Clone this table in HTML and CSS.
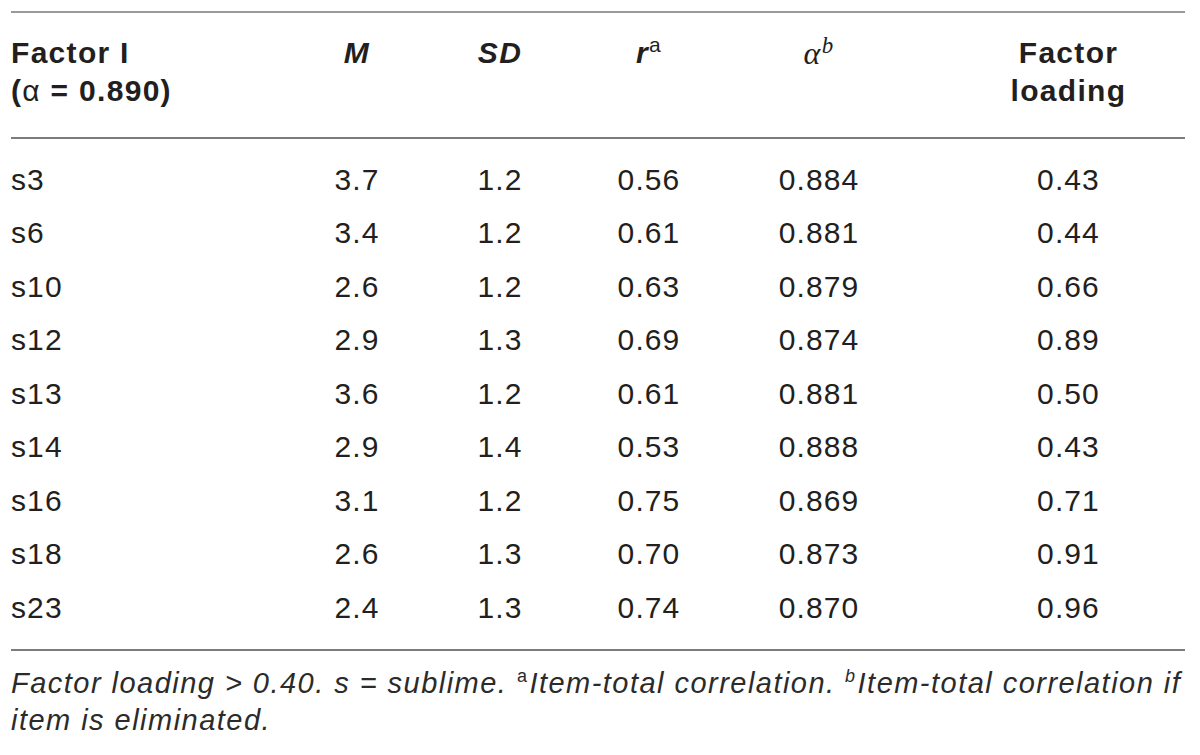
FILE: index.html
```html
<!DOCTYPE html>
<html lang="en">
<head>
    <meta charset="UTF-8">
    <title>Factor I item statistics</title>
    <link rel="stylesheet" href="styles.css">
</head>
<body>

<div class="table-wrap">
    <table class="stats">
        <colgroup>
            <col class="c-item">
            <col class="c-m">
            <col class="c-sd">
            <col class="c-r">
            <col class="c-alpha">
            <col class="c-load">
        </colgroup>
        <thead>
            <tr>
                <th class="item">Factor I<br>(<span class="sym">α</span> = 0.890)</th>
                <th><i>M</i></th>
                <th><i>SD</i></th>
                <th><i>r</i><sup class="sup-a">a</sup></th>
                <th><span class="greek">α</span><sup class="sup-b">b</sup></th>
                <th class="load">Factor<br>loading</th>
            </tr>
        </thead>
        <tbody>
            <tr><td class="item">s3</td><td>3.7</td><td>1.2</td><td>0.56</td><td>0.884</td><td class="load">0.43</td></tr>
            <tr><td class="item">s6</td><td>3.4</td><td>1.2</td><td>0.61</td><td>0.881</td><td class="load">0.44</td></tr>
            <tr><td class="item">s10</td><td>2.6</td><td>1.2</td><td>0.63</td><td>0.879</td><td class="load">0.66</td></tr>
            <tr><td class="item">s12</td><td>2.9</td><td>1.3</td><td>0.69</td><td>0.874</td><td class="load">0.89</td></tr>
            <tr><td class="item">s13</td><td>3.6</td><td>1.2</td><td>0.61</td><td>0.881</td><td class="load">0.50</td></tr>
            <tr><td class="item">s14</td><td>2.9</td><td>1.4</td><td>0.53</td><td>0.888</td><td class="load">0.43</td></tr>
            <tr><td class="item">s16</td><td>3.1</td><td>1.2</td><td>0.75</td><td>0.869</td><td class="load">0.71</td></tr>
            <tr><td class="item">s18</td><td>2.6</td><td>1.3</td><td>0.70</td><td>0.873</td><td class="load">0.91</td></tr>
            <tr><td class="item">s23</td><td>2.4</td><td>1.3</td><td>0.74</td><td>0.870</td><td class="load">0.96</td></tr>
        </tbody>
    </table>

    <p class="note">Factor loading &gt; 0.40. s = sublime. <sup>a</sup>Item-total correlation. <sup class="note-b">b</sup>Item-total correlation if<br>item is eliminated.</p>
</div>

</body>
</html>
```

FILE: styles.css
```css
/* Page */
body {
    margin: 0;
    padding: 0;
    background-color: #ffffff;
    color: #231f20;
    font-family: 'Liberation Sans', Arial, sans-serif;
}

.table-wrap {
    width: 1174px;
    margin-left: 11px;
    padding-top: 11px;
}

/* Table */
.stats {
    width: 100%;
    border-collapse: collapse;
    table-layout: fixed;
    font-size: 30px;
    letter-spacing: 1.1px;
}

.c-item { width: 279px; }
.c-m { width: 134px; }
.c-sd { width: 152px; }
.c-r { width: 146px; }
.c-alpha { width: 194px; }
.c-load { width: 269px; }

.stats thead tr {
    border-top: 2px solid #9a9a9a;
    border-bottom: 2px solid #7c7c7c;
}

.stats tbody {
    border-bottom: 2px solid #7c7c7c;
}

.stats th {
    font-weight: bold;
    line-height: 38px;
    vertical-align: top;
    text-align: center;
    padding: 21px 0 27px 0;
    letter-spacing: 1.3px;
}

.stats td {
    line-height: 38px;
    text-align: center;
    padding: 7.75px 0;
}

.stats tbody tr:first-child td {
    padding-top: 21.5px;
}

.stats tbody tr:last-child td {
    padding-bottom: 22px;
}

.stats .item {
    text-align: left;
}

.stats .load {
    padding-left: 36px;
}

.sym {
    font-weight: normal;
}

.greek {
    font-family: 'Liberation Serif', 'Times New Roman', serif;
    font-style: italic;
    font-weight: normal;
    font-size: 32px;
}

sup {
    line-height: 0;
}

.sup-a {
    font-weight: normal;
    font-size: 21px;
}

.sup-b {
    font-family: 'Liberation Serif', 'Times New Roman', serif;
    font-style: italic;
    font-weight: normal;
    font-size: 23px;
}

/* Footnote */
.note {
    margin: 14px 0 0 0;
    font-size: 29px;
    font-style: italic;
    letter-spacing: 1.47px;
    line-height: 37px;
    color: #2b2b2b;
    white-space: nowrap;
}

.note sup {
    font-size: 18px;
    font-style: normal;
    vertical-align: 11px;
    margin-right: 1px;
}

.note .note-b {
    font-style: italic;
}
```
